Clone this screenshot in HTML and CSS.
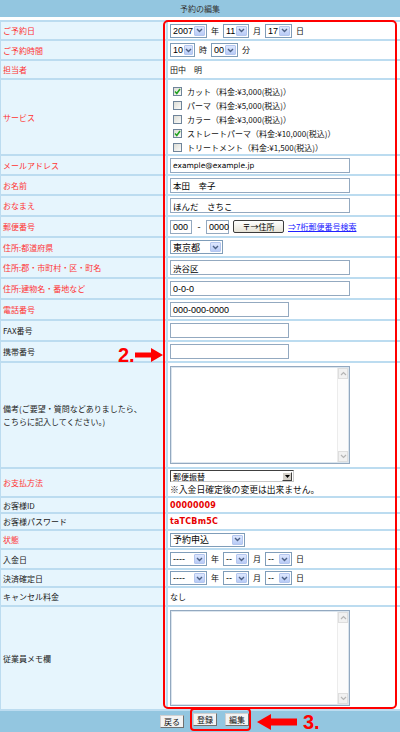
FILE: index.html
```html
<!DOCTYPE html>
<html lang="ja">
<head>
<meta charset="utf-8">
<title>予約の編集</title>
<link rel="stylesheet" href="styles.css">
</head>
<body>
<div class="page">
  <div class="titlebar">予約の編集</div>

  <div class="form">
    <div class="row h19">
      <div class="label req">ご予約日</div>
      <div class="value">
        <span class="sel w37"><span class="sel-val">2007</span><span class="sel-btn"><svg width="7" height="5" viewBox="0 0 7 5"><path d="M1 1l2.5 2.5L6 1" fill="none" stroke="#4d6185" stroke-width="1.4"/></svg></span></span>
        <span class="unit">年</span>
        <span class="sel w26"><span class="sel-val">11</span><span class="sel-btn"><svg width="7" height="5" viewBox="0 0 7 5"><path d="M1 1l2.5 2.5L6 1" fill="none" stroke="#4d6185" stroke-width="1.4"/></svg></span></span>
        <span class="unit">月</span>
        <span class="sel w27"><span class="sel-val">17</span><span class="sel-btn"><svg width="7" height="5" viewBox="0 0 7 5"><path d="M1 1l2.5 2.5L6 1" fill="none" stroke="#4d6185" stroke-width="1.4"/></svg></span></span>
        <span class="unit">日</span>
      </div>
    </div>

    <div class="row h20">
      <div class="label req">ご予約時間</div>
      <div class="value">
        <span class="sel w25"><span class="sel-val">10</span><span class="sel-btn"><svg width="7" height="5" viewBox="0 0 7 5"><path d="M1 1l2.5 2.5L6 1" fill="none" stroke="#4d6185" stroke-width="1.4"/></svg></span></span>
        <span class="unit">時</span>
        <span class="sel w27"><span class="sel-val">00</span><span class="sel-btn"><svg width="7" height="5" viewBox="0 0 7 5"><path d="M1 1l2.5 2.5L6 1" fill="none" stroke="#4d6185" stroke-width="1.4"/></svg></span></span>
        <span class="unit">分</span>
      </div>
    </div>

    <div class="row h19">
      <div class="label req">担当者</div>
      <div class="value">田中　明</div>
    </div>

    <div class="row h76">
      <div class="label req">サービス</div>
      <div class="value checks">
        <div class="check"><span class="cb"><svg width="7" height="7" viewBox="0 0 7 7"><path d="M1 3.5l1.8 2L6 1" fill="none" stroke="#21a121" stroke-width="1.5"/></svg></span>カット（料金:¥3,000(税込)）</div>
        <div class="check"><span class="cb"></span>パーマ（料金:¥5,000(税込)）</div>
        <div class="check"><span class="cb"></span>カラー（料金:¥3,000(税込)）</div>
        <div class="check"><span class="cb"><svg width="7" height="7" viewBox="0 0 7 7"><path d="M1 3.5l1.8 2L6 1" fill="none" stroke="#21a121" stroke-width="1.5"/></svg></span>ストレートパーマ（料金:¥10,000(税込)）</div>
        <div class="check"><span class="cb"></span>トリートメント（料金:¥1,500(税込)）</div>
      </div>
    </div>

    <div class="row h20">
      <div class="label req">メールアドレス</div>
      <div class="value"><span class="inp w180 latin">example@example.jp</span></div>
    </div>

    <div class="row h20">
      <div class="label req">お名前</div>
      <div class="value"><span class="inp w180">本田　幸子</span></div>
    </div>

    <div class="row h21">
      <div class="label req">おなまえ</div>
      <div class="value"><span class="inp w180">ほんだ　さちこ</span></div>
    </div>

    <div class="row h21">
      <div class="label req">郵便番号</div>
      <div class="value">
        <span class="inp short w22 digits">000</span>
        <span class="dash">-</span>
        <span class="inp short w23 digits">0000</span>
        <span class="zipbtn">〒→住所</span>
        <span class="link">⇒7桁郵便番号検索</span>
      </div>
    </div>

    <div class="row h20">
      <div class="label req">住所:都道府県</div>
      <div class="value">
        <span class="sel w53"><span class="sel-val">東京都</span><span class="sel-btn"><svg width="7" height="5" viewBox="0 0 7 5"><path d="M1 1l2.5 2.5L6 1" fill="none" stroke="#4d6185" stroke-width="1.4"/></svg></span></span>
      </div>
    </div>

    <div class="row h21">
      <div class="label req">住所:郡・市町村・区・町名</div>
      <div class="value"><span class="inp w180">渋谷区</span></div>
    </div>

    <div class="row h21">
      <div class="label req">住所:建物名・番地など</div>
      <div class="value"><span class="inp w180 digits">0-0-0</span></div>
    </div>

    <div class="row h21">
      <div class="label req">電話番号</div>
      <div class="value"><span class="inp w119 digits">000-000-0000</span></div>
    </div>

    <div class="row h21">
      <div class="label">FAX番号</div>
      <div class="value"><span class="inp w119"></span></div>
    </div>

    <div class="row h21">
      <div class="label">携帯番号</div>
      <div class="value"><span class="inp w119"></span></div>
    </div>

    <div class="row h106">
      <div class="label">備考(ご要望・質問などありましたら、<br>こちらに記入してください。)</div>
      <div class="value">
        <div class="textarea">
          <div class="scroll">
            <span class="scroll-btn"><svg width="7" height="5" viewBox="0 0 7 5"><path d="M1 4l2.5-2.5L6 4" fill="none" stroke="#b5b5b5" stroke-width="1.2"/></svg></span>
            <span class="scroll-btn"><svg width="7" height="5" viewBox="0 0 7 5"><path d="M1 1l2.5 2.5L6 1" fill="none" stroke="#b5b5b5" stroke-width="1.2"/></svg></span>
          </div>
        </div>
      </div>
    </div>

    <div class="row h29">
      <div class="label req">お支払方法</div>
      <div class="value stack">
        <span class="sel-classic"><span class="sel-val">郵便振替</span><span class="classic-btn"><svg width="5" height="3" viewBox="0 0 5 3"><path d="M0 0h5L2.5 3z" fill="#000"/></svg></span></span>
        <span class="note">※入金日確定後の変更は出来ません。</span>
      </div>
    </div>

    <div class="row h16">
      <div class="label">お客様ID</div>
      <div class="value"><span class="code">00000009</span></div>
    </div>

    <div class="row h17">
      <div class="label">お客様パスワード</div>
      <div class="value"><span class="code">taTCBm5C</span></div>
    </div>

    <div class="row h19">
      <div class="label req">状態</div>
      <div class="value">
        <span class="sel w75"><span class="sel-val">予約申込</span><span class="sel-btn"><svg width="7" height="5" viewBox="0 0 7 5"><path d="M1 1l2.5 2.5L6 1" fill="none" stroke="#4d6185" stroke-width="1.4"/></svg></span></span>
      </div>
    </div>

    <div class="row h20">
      <div class="label">入金日</div>
      <div class="value">
        <span class="sel w37"><span class="sel-val">----</span><span class="sel-btn"><svg width="7" height="5" viewBox="0 0 7 5"><path d="M1 1l2.5 2.5L6 1" fill="none" stroke="#4d6185" stroke-width="1.4"/></svg></span></span>
        <span class="unit">年</span>
        <span class="sel w26"><span class="sel-val">--</span><span class="sel-btn"><svg width="7" height="5" viewBox="0 0 7 5"><path d="M1 1l2.5 2.5L6 1" fill="none" stroke="#4d6185" stroke-width="1.4"/></svg></span></span>
        <span class="unit">月</span>
        <span class="sel w27"><span class="sel-val">--</span><span class="sel-btn"><svg width="7" height="5" viewBox="0 0 7 5"><path d="M1 1l2.5 2.5L6 1" fill="none" stroke="#4d6185" stroke-width="1.4"/></svg></span></span>
        <span class="unit">日</span>
      </div>
    </div>

    <div class="row h18">
      <div class="label">決済確定日</div>
      <div class="value">
        <span class="sel w37"><span class="sel-val">----</span><span class="sel-btn"><svg width="7" height="5" viewBox="0 0 7 5"><path d="M1 1l2.5 2.5L6 1" fill="none" stroke="#4d6185" stroke-width="1.4"/></svg></span></span>
        <span class="unit">年</span>
        <span class="sel w26"><span class="sel-val">--</span><span class="sel-btn"><svg width="7" height="5" viewBox="0 0 7 5"><path d="M1 1l2.5 2.5L6 1" fill="none" stroke="#4d6185" stroke-width="1.4"/></svg></span></span>
        <span class="unit">月</span>
        <span class="sel w27"><span class="sel-val">--</span><span class="sel-btn"><svg width="7" height="5" viewBox="0 0 7 5"><path d="M1 1l2.5 2.5L6 1" fill="none" stroke="#4d6185" stroke-width="1.4"/></svg></span></span>
        <span class="unit">日</span>
      </div>
    </div>

    <div class="row h19">
      <div class="label">キャンセル料金</div>
      <div class="value">なし</div>
    </div>

    <div class="row h104">
      <div class="label">従業員メモ欄</div>
      <div class="value">
        <div class="textarea memo">
          <div class="scroll">
            <span class="scroll-btn"><svg width="7" height="5" viewBox="0 0 7 5"><path d="M1 4l2.5-2.5L6 4" fill="none" stroke="#b5b5b5" stroke-width="1.2"/></svg></span>
            <span class="scroll-btn"><svg width="7" height="5" viewBox="0 0 7 5"><path d="M1 1l2.5 2.5L6 1" fill="none" stroke="#b5b5b5" stroke-width="1.2"/></svg></span>
          </div>
        </div>
      </div>
    </div>
  </div>

  <div class="footer">
    <span class="btn">戻る</span>
    <span class="btn-group">
      <span class="btn">登録</span>
      <span class="btn">編集</span>
    </span>
    <svg class="arrow-left" width="40" height="16" viewBox="0 0 40 16"><polygon points="0,8 14,0 14,4.5 40,4.5 40,11.5 14,11.5 14,16" fill="#f00"/></svg>
    <span class="step">3.</span>
  </div>

  <div class="highlight"></div>
  <div class="callout-2">
    <span class="step">2.</span>
    <svg width="28" height="14" viewBox="0 0 28 14"><polygon points="0,4.5 16,4.5 16,0 28,7 16,14 16,9.5 0,9.5" fill="#f00"/></svg>
  </div>
</div>
</body>
</html>
```

FILE: styles.css
```css
* { box-sizing: border-box; }

body {
  margin: 0;
  background: #fff;
  font-family: "Noto Sans CJK JP", "DejaVu Sans", sans-serif;
  font-size: 8px;
  color: #222;
}

.page {
  position: relative;
  width: 400px;
  height: 732px;
  overflow: hidden;
}

.titlebar {
  height: 17px;
  background: #93c6e0;
  text-align: center;
  line-height: 17px;
  font-size: 8px;
  color: #333;
}

.form {
  margin-top: 3px;
  border-top: 2px solid #bcdcf0;
  border-left: 1px solid #bcdcf0;
}

.row {
  display: grid;
  grid-template-columns: 167px 1fr;
  border-bottom: 2px solid #bcdcf0;
}

.h16 { height: 16px; }
.h17 { height: 17px; }
.h18 { height: 18px; }
.h19 { height: 19px; }
.h20 { height: 20px; }
.h21 { height: 21px; }
.h29 { height: 29px; }
.h76 { height: 76px; }
.h104 { height: 104px; }
.h106 { height: 106px; }

.label {
  background: #e6f5fd;
  border-right: 2px solid #bcdcf0;
  display: flex;
  align-items: center;
  padding-left: 2px;
  line-height: 13px;
  color: #222;
}

.label.req { color: #f33; }

.value {
  display: flex;
  align-items: center;
  gap: 4px;
  padding-left: 2px;
  color: #111;
}

.unit { line-height: 1; }

/* XP style select */
.sel {
  display: inline-flex;
  height: 14px;
  border: 1px solid #7f9db9;
  background: #fff;
  font-family: "Liberation Sans", "Noto Sans CJK JP", sans-serif;
  font-size: 9px;
  color: #000;
}
.sel-val {
  flex: 1;
  display: flex;
  align-items: center;
  padding-left: 2px;
  white-space: nowrap;
}
.sel-btn {
  width: 11px;
  margin: 1px;
  border: 1px solid #b4c6ee;
  border-radius: 1px;
  background: linear-gradient(#dde7fe, #b8cbf6);
  display: flex;
  align-items: center;
  justify-content: center;
}

.w22 { width: 22px; }
.w23 { width: 23px; }
.w25 { width: 25px; }
.w26 { width: 26px; }
.w27 { width: 27px; }
.w37 { width: 37px; }
.w53 { width: 53px; }
.w75 { width: 75px; }
.w119 { width: 119px; }
.w180 { width: 180px; }

/* checkboxes */
.checks {
  flex-direction: column;
  align-items: flex-start;
  justify-content: flex-start;
  gap: 0;
  padding-top: 4px;
}
.check {
  height: 14px;
  display: flex;
  align-items: center;
  gap: 5px;
  padding-left: 3px;
  white-space: nowrap;
}
.cb {
  width: 9px;
  height: 9px;
  border: 1px solid #6f849a;
  background: linear-gradient(135deg, #dcdcd5, #fbfbf9);
  display: flex;
  align-items: center;
  justify-content: center;
}

/* text inputs */
.inp {
  height: 15px;
  border: 1px solid #93a9c0;
  background: #fff;
  display: flex;
  align-items: center;
  padding-left: 2px;
  font-size: 8.5px;
  color: #000;
  white-space: nowrap;
}
.inp.short { height: 14px; }
.latin { font-family: "DejaVu Sans", sans-serif; font-size: 7.5px; }
.digits { font-family: "Liberation Sans", sans-serif; font-size: 9px; }

.dash {
  width: 6px;
  text-align: center;
  font-family: "Liberation Sans", sans-serif;
  font-size: 9px;
}

.zipbtn {
  width: 51px;
  height: 13px;
  border: 1px solid #3c3c3c;
  border-radius: 2px;
  background: linear-gradient(#ffffff, #e6e3d6);
  display: flex;
  align-items: center;
  justify-content: center;
  font-size: 8px;
  color: #000;
}

.link {
  color: #2222ff;
  text-decoration: underline;
  white-space: nowrap;
}

/* textarea */
.textarea {
  width: 180px;
  height: 98px;
  border: 1px solid #93a9c0;
  box-shadow: inset 0 0 0 1px #dbe5ee;
  background: #fff;
  display: flex;
  justify-content: flex-end;
  padding: 1px;
}
.textarea.memo { height: 96px; }
.scroll {
  width: 11px;
  border-left: 1px solid #ececec;
  background: #fcfcfc;
  display: flex;
  flex-direction: column;
  justify-content: space-between;
}
.scroll-btn {
  height: 11px;
  border: 1px solid #dedede;
  background: #f1f1f1;
  display: flex;
  align-items: center;
  justify-content: center;
}

/* payment select (classic) */
.stack {
  flex-direction: column;
  align-items: flex-start;
  justify-content: center;
  gap: 2px;
}
.sel-classic {
  width: 124px;
  height: 12px;
  border: 1px solid;
  border-color: #404040 #c8c8c8 #c8c8c8 #404040;
  background: #fff;
  display: flex;
  align-items: center;
  font-size: 8px;
  color: #000;
}
.classic-btn {
  width: 10px;
  height: 9px;
  margin-right: 1px;
  border: 1px solid;
  border-color: #fff #404040 #404040 #fff;
  background: #d4d0c8;
  display: flex;
  align-items: center;
  justify-content: center;
}
.note {
  font-size: 8.8px;
  line-height: 11px;
  color: #111;
}

.code {
  font-family: "DejaVu Sans", sans-serif;
  font-weight: bold;
  font-size: 8px;
  letter-spacing: 0.2px;
  color: #e60000;
}

/* footer */
.footer {
  height: 21px;
  background: #93c6e0;
  display: flex;
  align-items: center;
  padding-left: 160px;
}
.btn {
  height: 13px;
  padding: 0 3px;
  border: 1px solid;
  border-color: #d0d0d0 #707070 #707070 #d0d0d0;
  background: #f3f3f3;
  font-size: 8px;
  line-height: 11px;
  color: #111;
}
.btn-group {
  align-self: flex-start;
  margin-top: -3px;
  margin-left: 6px;
  height: 23px;
  padding-left: 1px;
  border: 2px solid #f00;
  border-radius: 4px;
  display: flex;
  align-items: center;
  gap: 8px;
}
.arrow-left { margin-left: 6px; }
.footer .step { margin-left: 6px; }

.step {
  font-family: "Liberation Sans", sans-serif;
  font-weight: bold;
  font-size: 20px;
  line-height: 1;
  color: #f00;
}

/* annotations */
.highlight {
  position: absolute;
  left: 163px;
  top: 20px;
  width: 234px;
  height: 689px;
  border: 2px solid #f00;
  border-radius: 5px;
  pointer-events: none;
}
.callout-2 {
  position: absolute;
  left: 118px;
  top: 345px;
  display: flex;
  align-items: center;
  gap: 0;
}
```
